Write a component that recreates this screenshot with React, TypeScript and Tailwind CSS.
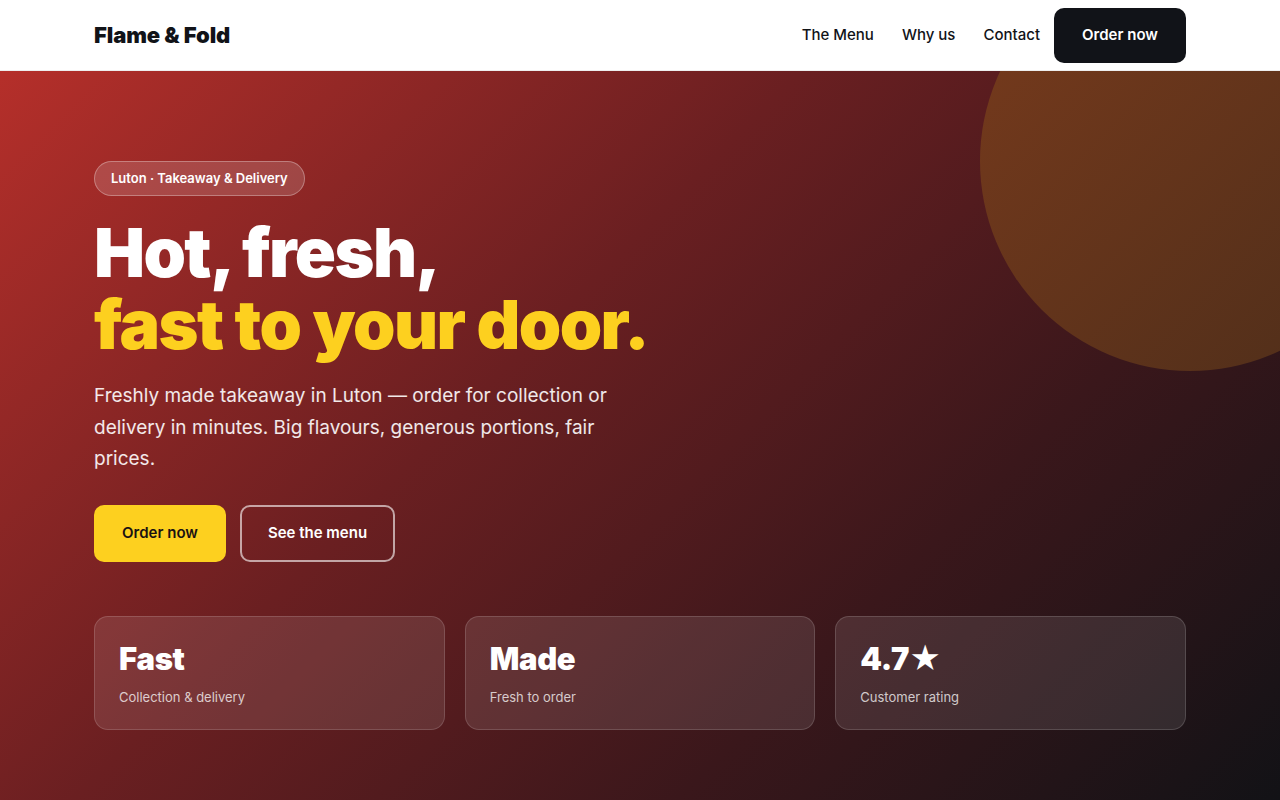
export default function App() {
  const stats = [
    { title: "Fast", sub: "Collection & delivery" },
    { title: "Made", sub: "Fresh to order" },
    { title: "4.7★", sub: "Customer rating" },
  ]

  return (
    <div className="min-h-screen bg-[#141217] font-['Inter',sans-serif] text-white">
      {/* Header */}
      <header className="h-[71px] border-b border-[#eeeeee] bg-white">
        <div className="mx-auto flex h-full max-w-[1092px] items-center justify-between">
          <span className="text-[22px] font-black tracking-[-0.005em] text-[#111318]">Flame &amp; Fold</span>
          <nav className="flex items-center">
            <a className="mr-[28px] text-[15px] font-medium text-[#111318]">The Menu</a>
            <a className="mr-[28px] text-[15px] font-medium text-[#111318]">Why us</a>
            <a className="mr-[14px] text-[15px] font-medium text-[#111318]">Contact</a>
            <button className="h-[55px] w-[132px] rounded-[10px] bg-[#111318] text-[15px] font-semibold text-white">
              Order now
            </button>
          </nav>
        </div>
      </header>

      {/* Hero */}
      <section className="relative min-h-[729px] overflow-hidden bg-[linear-gradient(135deg,#b52f2a_0%,#6a1f21_40%,#3a171b_70%,#121216_100%)]">
        {/* decorative circle */}
        <div className="absolute left-[980px] top-[-120px] h-[420px] w-[420px] rounded-full bg-[linear-gradient(135deg,#7a3c1c,#4f2f1a)] opacity-95" />

        <div className="relative mx-auto max-w-[1092px] pt-[90px]">
          <span className="inline-flex h-[35px] items-center rounded-full border border-white/30 bg-white/15 px-4 text-[13px] font-semibold text-white">
            Luton · Takeaway &amp; Delivery
          </span>

          <h1 className="mt-[20px] text-[68px] font-black leading-[72px] tracking-[-0.023em]">
            <span className="block text-white">Hot, fresh,</span>
            <span className="block text-[#fdd01f]">fast to your door.</span>
          </h1>

          <p className="mt-[20px] max-w-[530px] text-[19px] leading-[31.5px] text-white/90">
            Freshly made takeaway in Luton — order for collection or delivery in minutes. Big flavours, generous portions, fair prices.
          </p>

          <div className="mt-[30px] flex gap-[14px]">
            <button className="h-[57px] w-[132px] rounded-[10px] bg-[#fdd01f] text-[15px] font-semibold text-[#1a1212]">
              Order now
            </button>
            <button className="h-[57px] w-[155px] rounded-[10px] border-2 border-white/60 text-[15px] font-semibold text-white">
              See the menu
            </button>
          </div>

          <div className="mt-[54px] grid grid-cols-3 gap-[20px]">
            {stats.map((s) => (
              <div key={s.title} className="h-[114px] rounded-[14px] border border-white/15 bg-white/10 px-[24px] pt-[24px]">
                <div className="text-[31px] font-black leading-[36px] tracking-[-0.01em]">{s.title}</div>
                <div className="mt-[11px] text-[13px] text-white/75">{s.sub}</div>
              </div>
            ))}
          </div>
        </div>
      </section>
    </div>
  )
}
